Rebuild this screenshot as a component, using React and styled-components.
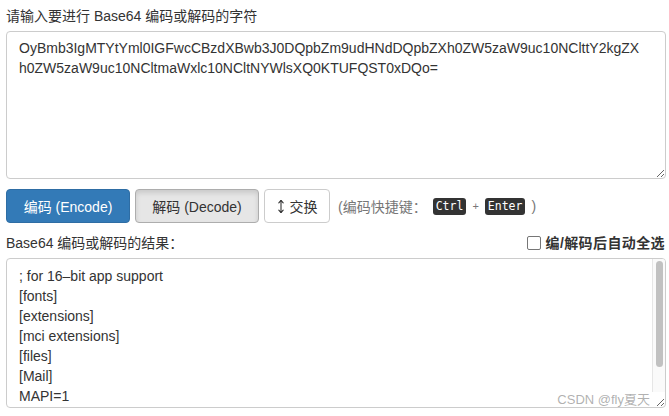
import React from "react";
import styled, { createGlobalStyle } from "styled-components";

const Global = createGlobalStyle`
  html, body { margin: 0; padding: 0; background: #fff; }
  body {
    font-family: "Liberation Sans", "Noto Sans CJK SC", sans-serif;
    font-size: 14px;
    color: #333;
  }
  * { box-sizing: border-box; }
`;

const Page = styled.div`
  padding: 6px 3px 0 6px;
  display: flex;
  flex-direction: column;
`;

const Title = styled.div`
  font-size: 14px;
  line-height: 20px;
  margin-bottom: 5px;
  color: #333;
`;

const Area = styled.textarea`
  display: block;
  width: 100%;
  height: ${(p) => p.$h}px;
  padding: ${(p) => p.$pt}px ${(p) => p.$pr}px 6px 12px;
  border: 1px solid #ccc;
  border-radius: 4px;
  font-family: "Liberation Sans", "Noto Sans CJK SC", sans-serif;
  font-size: 14px;
  line-height: 20px;
  color: #333;
  resize: vertical;
  outline: none;
  word-break: break-all;
  overflow: hidden;
`;

const Toolbar = styled.div`
  display: flex;
  align-items: center;
  gap: 5px;
  margin-top: 10px;
`;

const Button = styled.button`
  height: 34px;
  width: ${(p) => p.$w}px;
  padding: 0 10px;
  border-radius: 4px;
  font-family: "Liberation Sans", "Noto Sans CJK SC", sans-serif;
  font-size: 14px;
  display: inline-flex;
  align-items: center;
  justify-content: center;
  gap: 5px;
  cursor: pointer;
  border: 1px solid
    ${(p) => (p.$variant === "primary" ? "#2e6da4" : p.$variant === "active" ? "#adadad" : "#ccc")};
  background: ${(p) => (p.$variant === "primary" ? "#337ab7" : p.$variant === "active" ? "#e6e6e6" : "#fff")};
  color: ${(p) => (p.$variant === "primary" ? "#fff" : "#333")};
  box-shadow: ${(p) => (p.$variant === "active" ? "inset 0 3px 5px rgba(0,0,0,0.125)" : "none")};
`;

const Hint = styled.span`
  margin-left: 3px;
  color: #777;
  font-size: 14px;
  display: inline-flex;
  align-items: center;
  gap: 6px;
`;

const Kbd = styled.kbd`
  font-family: "DejaVu Sans Mono", "Liberation Mono", monospace;
  font-size: 11.5px;
  line-height: 17px;
  padding: 0 3px;
  border-radius: 3px;
  background: #333;
  color: #fff;
`;

const Plus = styled.span`
  font-size: 11px;
  color: #777;
`;

const ResultHead = styled.div`
  display: flex;
  align-items: center;
  justify-content: space-between;
  margin-top: 10px;
  margin-bottom: 5px;
  line-height: 20px;
`;

const Label = styled.span`
  font-size: 14px;
  color: #333;
`;

const CheckLabel = styled.label`
  display: inline-flex;
  align-items: center;
  gap: 5px;
  font-weight: bold;
  font-size: 14px;
  letter-spacing: 0.4px;
  color: #333;
  margin-right: 1px;
`;

const Check = styled.input`
  appearance: none;
  width: 14px;
  height: 14px;
  margin: 0;
  border: 1.5px solid #767676;
  border-radius: 2px;
  background: #fff;
`;

const ResultWrap = styled.div`
  position: relative;
`;

const ScrollTrack = styled.div`
  position: absolute;
  top: 1px;
  right: 1px;
  bottom: 16px;
  width: 13px;
  background: #fafafa;
  border-left: 1px solid #e6e6e6;
  border-top-right-radius: 3px;
  padding: 2px 2px 0 3px;
  pointer-events: none;
`;

const ScrollThumb = styled.div`
  height: 106px;
  border-radius: 4px;
  background: #c1c1c1;
`;

const Watermark = styled.span`
  position: absolute;
  right: 16px;
  bottom: 0px;
  font-size: 13px;
  color: rgba(110, 110, 110, 0.55);
  pointer-events: none;
`;

const SwapIcon = () => (
  <svg width="8" height="15" viewBox="0 0 8 15" fill="none" stroke="#333" strokeWidth="1.1" strokeLinecap="round" strokeLinejoin="round">
    <path d="M4 1.5v12" />
    <path d="M1.8 3.8L4 1.5 6.2 3.8" />
    <path d="M1.8 11.2L4 13.5 6.2 11.2" />
  </svg>
);

const input =
  "OyBmb3IgMTYtYml0IGFwcCBzdXBwb3J0DQpbZm9udHNdDQpbZXh0ZW5zaW9uc10NClttY2kgZXh0ZW5zaW9uc10NCltmaWxlc10NCltNYWlsXQ0KTUFQST0xDQo=";

const output =
  "; for 16\u2013bit app support\n[fonts]\n[extensions]\n[mci extensions]\n[files]\n[Mail]\nMAPI=1\n";

export default function App() {
  return (
    <>
      <Global />
      <Page>
        <Title>请输入要进行 Base64 编码或解码的字符</Title>
        <Area $h={148} $pt={6} $pr={20} defaultValue={input} spellCheck={false} />
        <Toolbar>
          <Button $variant="primary" $w={124}>编码 (Encode)</Button>
          <Button $variant="active" $w={124}>解码 (Decode)</Button>
          <Button $w={66}>
            <SwapIcon />
            交换
          </Button>
          <Hint>
            (编码快捷键：<Kbd>Ctrl</Kbd><Plus>+</Plus><Kbd>Enter</Kbd>)
          </Hint>
        </Toolbar>
        <ResultHead>
          <Label>Base64 编码或解码的结果：</Label>
          <CheckLabel>
            <Check type="checkbox" />
            编/解码后自动全选
          </CheckLabel>
        </ResultHead>
        <ResultWrap>
          <Area $h={150} $pt={7} $pr={26} defaultValue={output} spellCheck={false} />
          <ScrollTrack>
            <ScrollThumb />
          </ScrollTrack>
          <Watermark>CSDN @fly夏天</Watermark>
        </ResultWrap>
      </Page>
    </>
  );
}
